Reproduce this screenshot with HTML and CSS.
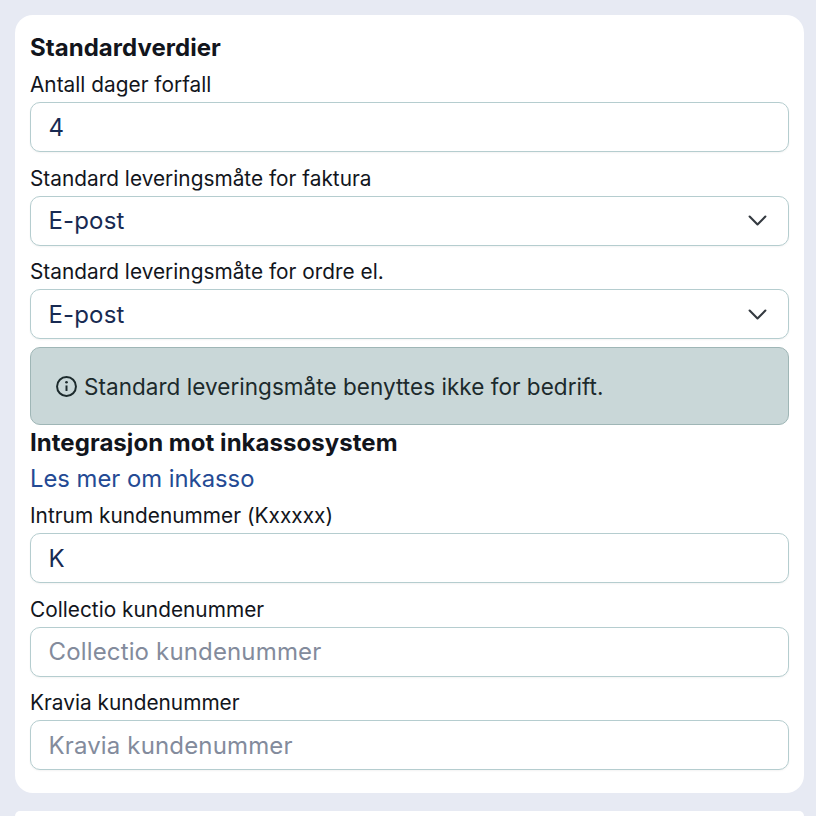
FILE: index.html
```html
<!DOCTYPE html>
<html lang="en">
<head>
  <meta charset="UTF-8" />
  <meta name="viewport" content="width=device-width, initial-scale=1.0"/>
  <title>Innstillinger</title>
  <link rel="stylesheet" href="styles.css">
</head>
<body>
  <div class="card">
    <h3 class="first">Standardverdier</h3>
    <div class="field">
      <label for="days">Antall dager forfall</label>
      <input type="text" id="days" value="4" />
    </div>
    <div class="field">
      <label>Standard leveringsmåte for faktura</label>
      <div class="select">
        <span>E-post</span>
        <svg class="chevron" viewBox="0 0 16 16"><path d="M2 5l6 6 6-6"/></svg>
      </div>
    </div>
    <div class="field">
      <label>Standard leveringsmåte for ordre el.</label>
      <div class="select">
        <span>E-post</span>
        <svg class="chevron" viewBox="0 0 16 16"><path d="M2 5l6 6 6-6"/></svg>
      </div>
    </div>
    <div class="alert">
      <svg class="info" viewBox="0 0 16 16">
        <circle cx="8" cy="8" r="7.2"/>
        <path d="M8 7.2v4.2"/>
        <circle class="dot" cx="8" cy="4.8" r="1"/>
      </svg>
      <span>Standard leveringsmåte benyttes ikke for bedrift.</span>
    </div>

    <h3 class="second">Integrasjon mot inkassosystem</h3>
    <a class="link" href="#">Les mer om inkasso</a>
    <div class="field">
      <label for="intrum">Intrum kundenummer (Kxxxxx)</label>
      <input type="text" id="intrum" value="K" />
    </div>
    <div class="field">
      <label for="collectio">Collectio kundenummer</label>
      <input type="text" id="collectio" placeholder="Collectio kundenummer" />
    </div>
    <div class="field">
      <label for="kravia">Kravia kundenummer</label>
      <input type="text" id="kravia" placeholder="Kravia kundenummer" />
    </div>
  </div>
  <div class="card next"></div>
</body>
</html>
```

FILE: styles.css
```css
html {
  overflow: hidden;
}

body {
  margin: 0;
  padding: 15px 12px 0 15px;
  height: 816px;
  box-sizing: border-box;
  overflow: hidden;
  background: #e7eaf3;
  font-family: 'Inter', sans-serif;
  color: #12151c;
}

.card {
  background: white;
  border-radius: 18px;
  padding: 19px 15px 23px;
  height: 778px;
  box-sizing: border-box;
}

.card.next {
  margin-top: 18px;
  height: 5px;
  padding: 0;
  border-radius: 18px 18px 0 0;
}

h3 {
  font-size: 24px;
  letter-spacing: 0.04px;
  line-height: 28px;
  font-weight: 700;
  margin: 0;
}

h3.first {
  margin-bottom: 9px;
}

h3.second {
  margin-top: 4px;
}

label {
  display: block;
  font-size: 20.8px;
  letter-spacing: 0.02px;
  line-height: 28px;
  margin-bottom: 3px;
}

.field {
  margin-bottom: 12.6px;
}

.field:last-child {
  margin-bottom: 0;
}

input, .select {
  display: flex;
  align-items: center;
  justify-content: space-between;
  width: 100%;
  height: 50px;
  box-sizing: border-box;
  padding: 0 17.5px;
  font-family: inherit;
  font-size: 24px;
  letter-spacing: 0.15px;
  color: #182a52;
  background: white;
  border: 1.3px solid #b5cdcf;
  border-radius: 10px;
  box-shadow: 0 1px 2px rgba(0, 0, 0, 0.05);
}

input::placeholder {
  color: #838b9c;
}

.chevron {
  width: 21px;
  height: 21px;
  margin-right: 3px;
  fill: none;
  stroke: #343a40;
  stroke-width: 1.6;
  stroke-linecap: round;
  stroke-linejoin: round;
}

.alert {
  display: flex;
  align-items: center;
  gap: 7px;
  height: 78px;
  box-sizing: border-box;
  margin-top: -4.6px;
  padding: 0 25px;
  font-size: 22.5px;
  letter-spacing: 0.04px;
  color: #1c2a2c;
  background: #c9d7d8;
  border: 1.3px solid #9fb6b6;
  border-radius: 10px;
}

.info {
  width: 21px;
  height: 21px;
  fill: none;
  stroke: #1c2a2c;
  stroke-width: 1.5;
}

.info .dot {
  fill: #1c2a2c;
  stroke: none;
}

.link {
  display: block;
  margin: 7px 0 8px;
  font-size: 23.8px;
  line-height: 30px;
  color: #244a94;
  text-decoration: none;
}
```
